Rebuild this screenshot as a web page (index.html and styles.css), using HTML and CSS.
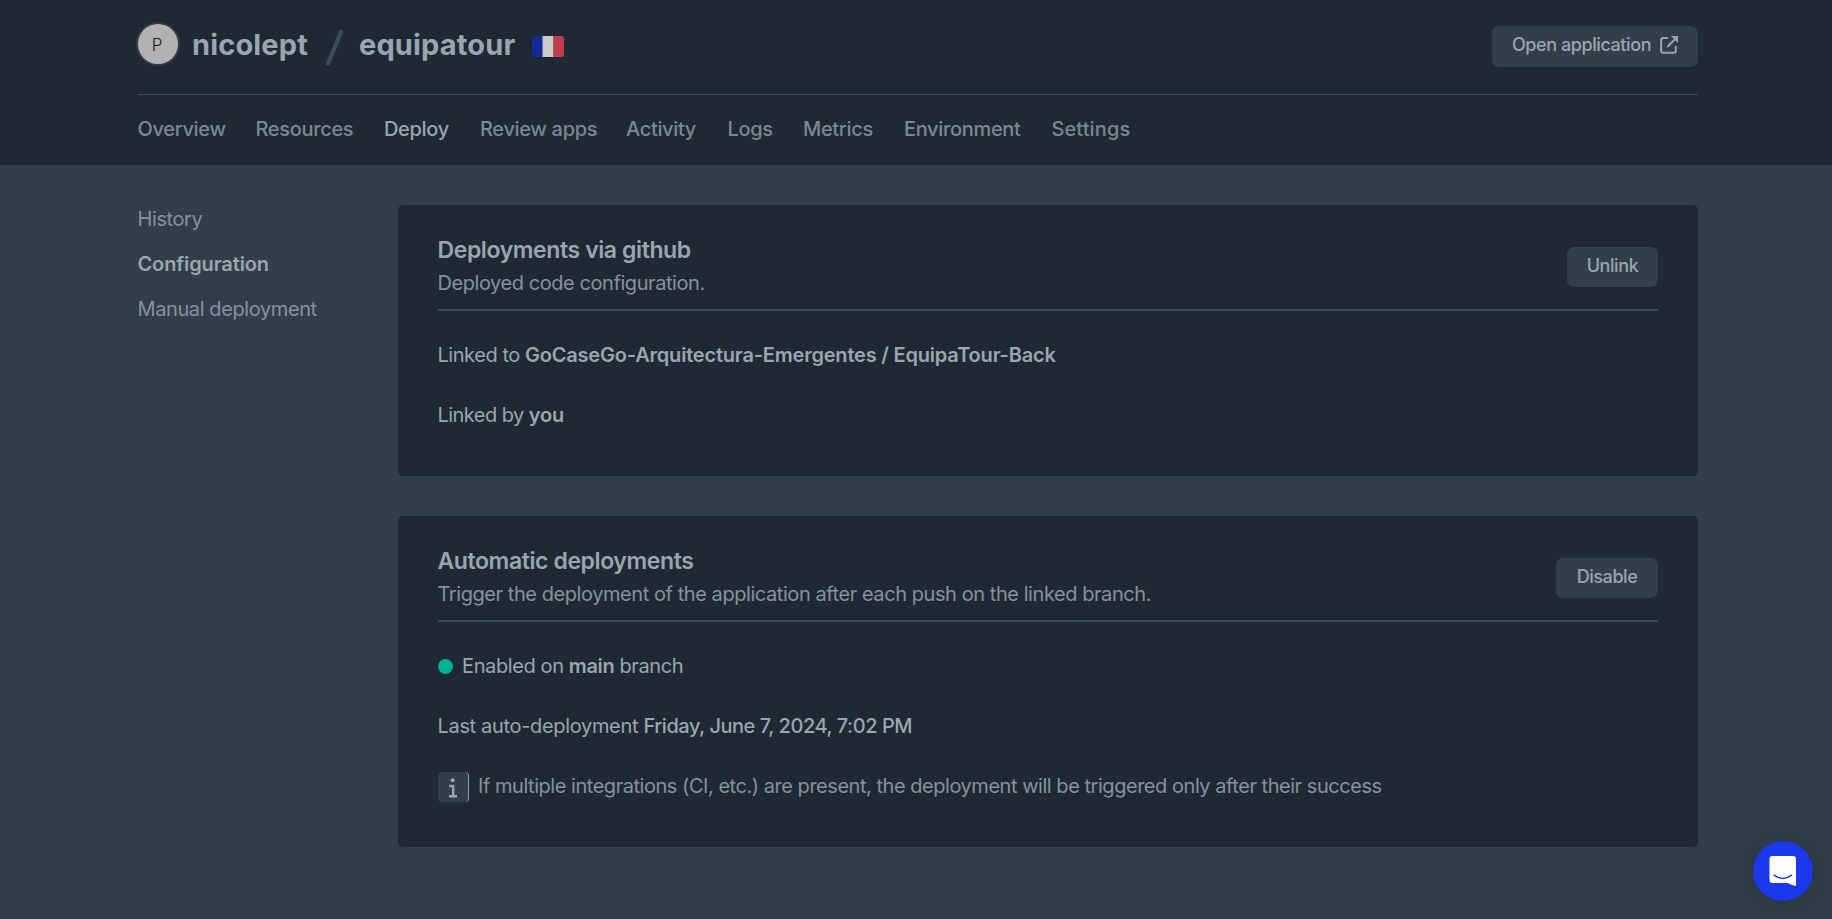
FILE: index.html
```html
<!DOCTYPE html>
<html lang="en">
<head>
<meta charset="utf-8">
<title>equipatour - Deploy</title>
<link rel="stylesheet" href="styles.css">
</head>
<body>
<header class="header">
  <div class="header-top">
    <div class="avatar">P</div>
    <span class="owner">nicolept</span>
    <svg class="slash" width="20" height="38" viewBox="0 0 20 38"><path d="M3 34.500 L16 3" stroke="#3d4b58" stroke-width="4.400" stroke-linecap="round"/></svg>
    <span class="app">equipatour</span>
    <svg class="flag" width="32" height="21" viewBox="0 0 32 21"><path d="M3 0H10.500V21H3Q0 21 0 18V3Q0 0 3 0Z" fill="#122b98"/><path d="M10.500 0H21.500V21H10.500Z" fill="#cccccc"/><path d="M21.500 0H29Q32 0 32 3V18Q32 21 29 21H21.500Z" fill="#c63b48"/></svg>
    <a class="button open-app"><span>Open application</span>
      <svg width="18" height="18" viewBox="0 0 18 18" fill="none"><path d="M7.200 2H3.300Q1.100 2 1.100 4.200V14.500Q1.100 16.700 3.300 16.700H13.600Q15.800 16.700 15.800 14.500V10.800" stroke="#9aa5b1" stroke-width="2" stroke-linecap="round"/><path d="M8 10.200L14.500 3.700" stroke="#9aa5b1" stroke-width="2" stroke-linecap="round"/><path d="M11 0H18V7Z" fill="#9aa5b1"/></svg>
    </a>
  </div>
  <nav class="tabs">
    <a>Overview</a><a>Resources</a><a class="active">Deploy</a><a>Review apps</a><a>Activity</a><a>Logs</a><a>Metrics</a><a>Environment</a><a class="settings">Settings</a>
  </nav>
</header>
<main class="page">
  <aside class="sidebar">
    <a>History</a>
    <a class="current">Configuration</a>
    <a>Manual deployment</a>
  </aside>
  <div class="cards">
    <section class="card">
      <div class="card-head">
        <div><h2>Deployments via github</h2><p>Deployed code configuration.</p></div>
        <button class="button unlink">Unlink</button>
      </div>
      <div class="card-body">
        <p class="linked-to">Linked to <b>GoCaseGo-Arquitectura-Emergentes / EquipaTour-Back</b></p>
        <p class="linked-by">Linked by <b>you</b></p>
      </div>
    </section>
    <section class="card">
      <div class="card-head">
        <div><h2 class="auto-title">Automatic deployments</h2><p>Trigger the deployment of the application after each push on the linked branch.</p></div>
        <button class="button disable">Disable</button>
      </div>
      <div class="card-body">
        <p class="status"><i class="dot"></i><span>Enabled on <b>main</b> branch</span></p>
        <p class="last">Last auto-deployment <time>Friday, June 7, 2024, 7:02 PM</time></p>
        <p class="note"><span class="info"><svg width="10" height="20" viewBox="0 0 10 20"><circle cx="4.600" cy="2.200" r="2" fill="#9aa5b1"/><path d="M1.200 8H5.200V18M1 18.200H9" fill="none" stroke="#9aa5b1" stroke-width="2.400"/></svg></span><span>If multiple integrations (CI, etc.) are present, the deployment will be triggered only after their success</span></p>
      </div>
    </section>
  </div>
</main>
<div class="launcher">
  <svg width="28" height="32" viewBox="0 0 28 32"><path d="M3.500 1H24Q27 1 27 4V31Q22.500 30 18.500 28H3.500Q.5 28 .5 25V4Q.5 1 3.500 1Z" fill="#fff"/><path d="M5 20.200Q13.800 27 22.600 20.200" fill="none" stroke="#1939eb" stroke-width="1.500" stroke-linecap="round"/></svg>
</div>
</body>
</html>
```
FILE: styles.css
```css
* { box-sizing: border-box; }
body {
  margin: 0;
  height: 919px;
  overflow: hidden;
  background: #323e4a;
  color: #9aa5b1;
  font: 400 20px/30px Inter, "Liberation Sans", sans-serif;
}
p, h2 { margin: 0; }
b { font-weight: 600; }

.header {
  height: 165px;
  padding: 0 134px 0 138px;
  background: #1f2933;
}
.header-top {
  display: flex;
  align-items: flex-start;
  height: 95px;
  border-bottom: 1px solid #3e4c59;
}
.avatar {
  width: 40px;
  height: 40px;
  margin-top: 24px;
  border-radius: 50%;
  background: #b2b2b2;
  box-shadow: 0 0 0 2px #323f4b;
  color: #1c1c1c;
  font-size: 17px;
  font-weight: 300;
  line-height: 42px;
  text-align: center;
  text-indent: -2px;
}
.owner, .app {
  font-size: 29px;
  font-weight: 700;
  line-height: 40px;
  margin-top: 25px;
  letter-spacing: .15px;
}
.owner { width: 118px; margin-left: 14px; }
.slash { margin: 29px 0 0 14.500px; }
.app { width: 158px; margin-left: 14.500px; }
.flag { margin: 36px 0 0 14.500px; }
.button {
  display: flex;
  align-items: flex-start;
  justify-content: center;
  padding: 4px 0 0;
  height: 40px;
  border: 0;
  border-radius: 7px;
  background: #323f4b;
  color: #9aa5b1;
  font: 500 18px/30px Inter, "Liberation Sans", sans-serif;
  letter-spacing: -.42px;
}
.open-app {
  width: 206px;
  height: 41px;
  margin: 26px 0 0 auto;
  gap: 9px;
}
.open-app svg { margin-top: 6px; }

.tabs {
  display: grid;
  grid-template-columns: 118px 128.500px 96px 146px 101.500px 75.500px 101px 147.500px 1fr;
  margin-left: -.5px;
  padding-top: 19px;
  color: #7b8794;
  font-weight: 500;
  letter-spacing: -.33px;
}
.tabs .active { color: #9aa5b1; }
.tabs .settings { letter-spacing: .1px; }

.page {
  display: flex;
  padding-left: 138px;
}
.sidebar {
  display: flex;
  flex-direction: column;
  width: 260px;
  padding-top: 32px;
  margin-left: -.5px;
  margin-right: .5px;
  color: #8691a0;
  line-height: 45px;
  letter-spacing: -.4px;
}
.current { font-weight: 600; color: #9aa5b1; letter-spacing: -.12px; }
.cards {
  display: flex;
  flex-direction: column;
  gap: 40px;
  width: 1300px;
  padding-top: 40px;
}
.card {
  padding: 30px 40px 46px;
  border-radius: 5px;
  background: #1f2933;
}
.card-head {
  display: flex;
  justify-content: space-between;
  height: 76px;
  border-bottom: 2px solid #3e4c59;
}
.card-head h2 {
  margin-left: -.5px;
  font-size: 23px;
  font-weight: 600;
  line-height: 30px;
  letter-spacing: -.4px;
}
.card-head p {
  margin: 3px 0 0 -.5px;
  color: #8691a0;
  letter-spacing: -.435px;
}
.card-head .button { margin-top: 12px; }
.unlink { width: 91px; }
.disable { width: 102px; }
.card-body {
  display: flex;
  flex-direction: column;
  gap: 30px;
  padding-top: 29px;
  letter-spacing: -.45px;
}
.linked-to, .linked-by, .last { margin-left: -.5px; }
.linked-to b { letter-spacing: -.2px; }
.linked-by { letter-spacing: -.55px; }
.linked-by b { letter-spacing: -.2px; }
.status { display: flex; letter-spacing: -.39px; }
.dot {
  width: 15px;
  height: 15px;
  margin: 8px 9px 0 0;
  border-radius: 50%;
  background: #03b294;
}
.last { letter-spacing: -.33px; }
.last time { font-weight: 500; letter-spacing: -.45px; }
.note { display: flex; color: #8691a0; letter-spacing: -.465px; }
.info {
  width: 31px;
  height: 30px;
  margin: 1px 9px -1px 0;
  padding: 6px 0 0 10px;
  border-right: 1px solid #9aa5b1;
  border-radius: 4px;
  background: #323f4b;
}
.info svg { display: block; }

.launcher {
  position: fixed;
  right: 19px;
  bottom: 18px;
  width: 60px;
  height: 60px;
  padding: 14px 0 0 16px;
  border-radius: 50%;
  background: #1939eb;
  box-shadow: 0 1px 6px rgba(0, 0, 0, .06), 0 2px 32px rgba(0, 0, 0, .16);
}
```
